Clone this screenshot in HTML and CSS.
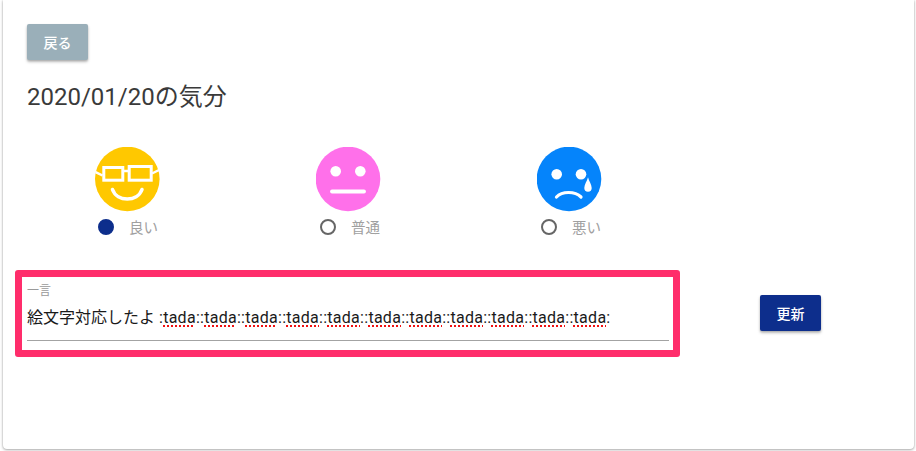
FILE: index.html
```html
<!DOCTYPE html>
<html lang="ja">
<head>
<meta charset="utf-8">
<title>気分</title>
<link rel="stylesheet" href="styles.css">
</head>
<body>
<main class="card">
  <button class="btn btn-back" type="button">戻る</button>
  <h1 class="title">2020/01/20の気分</h1>
  <div class="moods">
    <div class="mood">
      <svg class="face" viewBox="0 0 66 66" width="66" height="66">
        <circle cx="32.3" cy="32" r="32.300" fill="#ffc800"/>
        <g fill="none" stroke="#fff" stroke-width="3">
          <rect x="8.800" y="20.500" width="19" height="12.700"/>
          <rect x="34.200" y="19.500" width="22" height="13.700"/>
          <path d="M28 24h6.500" stroke-width="2.500"/>
          <path d="M0.500 25L7.500 28.500M57 26.500L64 23" stroke-width="2.500"/>
          <path d="M17.500 42.500C22 55.200 42.500 55.200 47 42.500" stroke-width="3.600" stroke-linecap="round"/>
        </g>
      </svg>
      <label class="choice"><span class="radio radio-on"></span><span class="choice-text">良い</span></label>
    </div>
    <div class="mood">
      <svg class="face" viewBox="0 0 66 66" width="66" height="66">
        <circle cx="32" cy="32" r="32.300" fill="#ff70ea"/>
        <circle cx="19.700" cy="24.300" r="5.300" fill="#fff"/>
        <circle cx="44.300" cy="24.300" r="5.300" fill="#fff"/>
        <path d="M16 44.500h32" stroke="#fff" stroke-width="3.800" stroke-linecap="round"/>
      </svg>
      <label class="choice choice-shifted"><span class="radio"></span><span class="choice-text">普通</span></label>
    </div>
    <div class="mood">
      <svg class="face" viewBox="0 0 66 66" width="66" height="66">
        <circle cx="32" cy="32" r="32.300" fill="#0584fb"/>
        <circle cx="19.700" cy="27.300" r="5.300" fill="#fff"/>
        <circle cx="44" cy="27.300" r="5.300" fill="#fff"/>
        <path d="M19.500 50C25 44 38 44 44 50" fill="none" stroke="#fff" stroke-width="3.200" stroke-linecap="round"/>
        <path d="M51 30.300C52 34.500 54.700 37.500 54.700 41a3.700 3.700 0 0 1-7.400 0C47.300 37.500 50 34.500 51 30.300Z" fill="#fff"/>
      </svg>
      <label class="choice choice-shifted"><span class="radio"></span><span class="choice-text">悪い</span></label>
    </div>
  </div>
  <form class="row">
    <div class="highlight">
      <div class="field">
        <span class="field-label">一言</span>
        <div class="field-value">絵文字対応したよ <span class="latin">:<span class="sp">tada</span>::<span class="sp">tada</span>::<span class="sp">tada</span>::<span class="sp">tada</span>::<span class="sp">tada</span>::<span class="sp">tada</span>::<span class="sp">tada</span>::<span class="sp">tada</span>::<span class="sp">tada</span>::<span class="sp">tada</span>::<span class="sp">tada</span>:</span></div>
      </div>
    </div>
    <button class="btn btn-update" type="button">更新</button>
  </form>
</main>
</body>
</html>
```
FILE: styles.css
```css
html, body {
  margin: 0;
  padding: 0;
  background: #fff;
}
body {
  width: 916px;
  height: 451px;
  overflow: hidden;
  font-family: Roboto, "Noto Sans CJK JP", sans-serif;
}
.card {
  box-sizing: border-box;
  width: 911px;
  height: 449px;
  margin-left: 3px;
  padding: 24px 24px 0 12px;
  background: #fff;
  border-radius: 0 0 4px 4px;
  box-shadow: 0 1px 3px rgba(0,0,0,.3), 0 0 2px rgba(0,0,0,.2);
}
.btn {
  display: block;
  width: 61px;
  height: 36px;
  padding: 0;
  border: 0;
  border-radius: 2px;
  color: #fff;
  font: 500 14px Roboto, "Noto Sans CJK JP", sans-serif;
  box-shadow: 0 2px 3px rgba(0,0,0,.25), 0 1px 2px rgba(0,0,0,.12);
}
.btn-back {
  margin-left: 12px;
  background: #9aafb9;
}
.btn-update {
  margin: 25px 0 0 80px;
  background: #0d2e8c;
}
.title {
  margin: 21px 0 0 12px;
  color: #3a3a3a;
  font-size: 24px;
  font-weight: 400;
  line-height: 32px;
}
.moods {
  display: flex;
  margin: 34px 0 0 80px;
}
.mood {
  display: flex;
  flex-direction: column;
  align-items: center;
  width: 66px;
  margin-right: 155px;
}
.face {
  display: block;
}
.choice {
  display: flex;
  align-items: center;
  flex: none;
  height: 22px;
  margin-top: 3px;
  color: #a0a0a0;
  font-size: 14.5px;
}
.choice-shifted {
  margin-left: 2px;
}
.radio {
  box-sizing: border-box;
  width: 16px;
  height: 16px;
  border: 2px solid #666;
  border-radius: 50%;
}
.radio-on {
  background: #0d2e8c;
  border-color: #0d2e8c;
}
.choice-text {
  margin-left: 15px;
  padding-bottom: 2px;
}
.row {
  display: flex;
  margin-top: 32px;
}
.highlight {
  box-sizing: border-box;
  width: 665px;
  height: 87px;
  padding: 8px 4px 0 5px;
  border: 7px solid #ff2d6b;
  border-radius: 3px;
}
.field {
  height: 55px;
  border-bottom: 1px solid #a3a3a3;
}
.field-label {
  display: block;
  color: #9a9a9a;
  font-size: 12px;
  line-height: 12px;
}
.field-value {
  margin-top: 11px;
  color: #1a1a1a;
  font-size: 16px;
  line-height: 20px;
  white-space: nowrap;
}
.latin {
  letter-spacing: .27px;
}
.sp {
  text-decoration: underline dotted #f01010 2px;
  text-underline-offset: 2px;
}
```
